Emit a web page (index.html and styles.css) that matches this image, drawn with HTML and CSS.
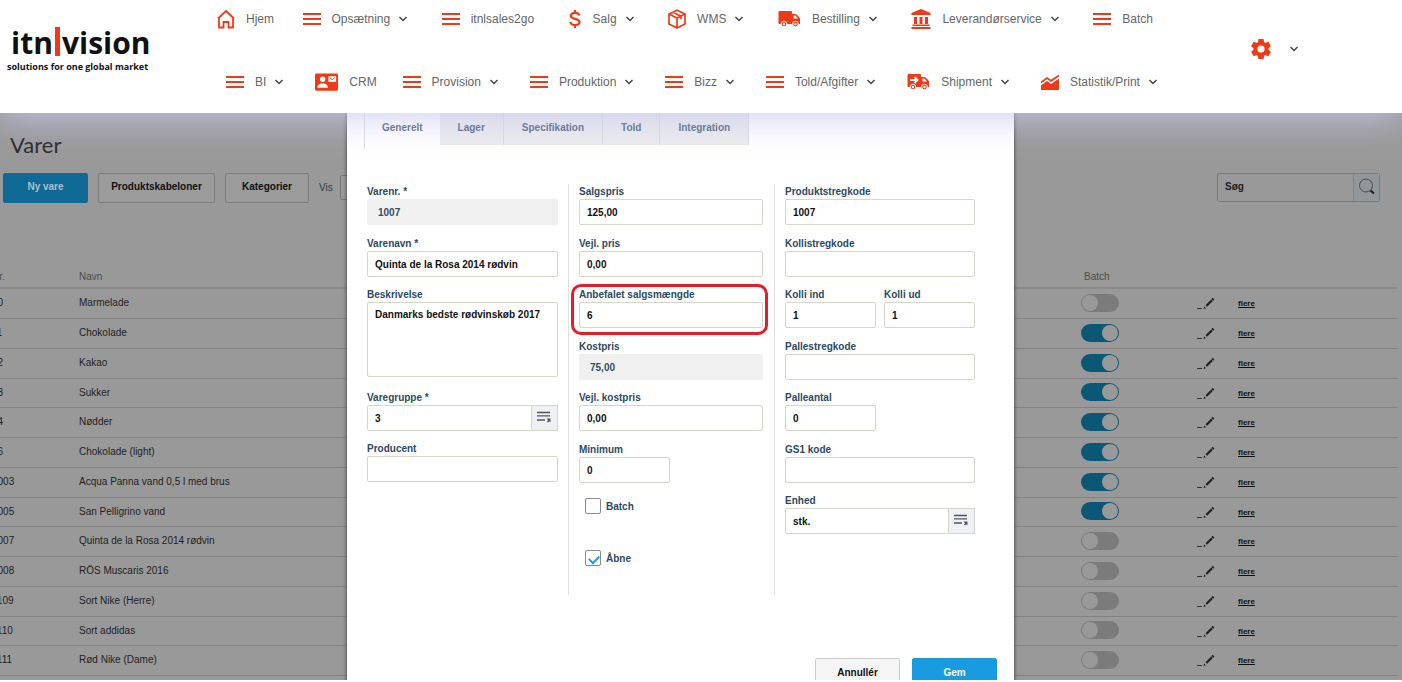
FILE: index.html
```html
<!DOCTYPE html>
<html lang="da">
<head>
<meta charset="utf-8">
<title>Varer</title>
<link rel="stylesheet" href="styles.css">
</head>
<body>
<svg class="sprite" aria-hidden="true">
  <symbol id="bars" viewBox="0 0 18 18"><path d="M0 4h18M0 9h18M0 14h18" stroke="currentColor" stroke-width="2"/></symbol>
  <symbol id="chev" viewBox="0 0 10 10"><path d="M1.500 3 5 6.500 8.500 3" fill="none" stroke="#444" stroke-width="1.500"/></symbol>
  <symbol id="home" viewBox="0 0 18 20"><path d="M1 9.500 9 2l8 7.500M2 9v9.500h4.500v-5.500h5v5.500H16V9" fill="none" stroke="currentColor" stroke-width="1.800"/></symbol>
  <symbol id="dollar" viewBox="0 0 14 20"><path d="M11.500 6.500C11 4.500 9.500 3.800 7 3.800S2.800 5 2.800 6.700c0 4.300 8.700 2 8.700 6.400 0 1.900-1.700 3-4.500 3s-4.300-1-4.700-3.200M7 1v3M7 16v3" fill="none" stroke="currentColor" stroke-width="2.200"/></symbol>
  <symbol id="box" viewBox="0 0 18 20"><path d="M9 1.200 17 5v10l-8 4-8-4V5zM1 5l8 4 8-4M9 9v10M5 3.200l8 4v3" fill="none" stroke="currentColor" stroke-width="1.700" stroke-linejoin="round"/></symbol>
  <symbol id="truck" viewBox="0 0 23 18"><path d="M1.500 1h11.500a1 1 0 0 1 1 1v2h3.500c1 0 4.500 3.500 4.500 4.500V14H1.500a1 1 0 0 1-1-1V2a1 1 0 0 1 1-1z" fill="currentColor"/><path d="M15.500 5.500h2l2.500 3h-4.500z" fill="#fff"/><g fill="currentColor" stroke="#fff"><circle cx="6" cy="14" r="2.800"/><circle cx="17.500" cy="14" r="2.800"/></g><g fill="#fff"><circle cx="6" cy="14" r="1.200"/><circle cx="17.500" cy="14" r="1.200"/></g></symbol>
  <symbol id="bank" viewBox="0 0 20 22"><path d="M10 1 19.500 5v2H.500V5zM3 9h3v7H3zM8.500 9h3v7h-3zM14 9h3v7h-3zM1.500 16.500h17V18h-17zM.500 19h19v2H.500z" fill="currentColor"/></symbol>
  <symbol id="card" viewBox="0 0 24 18"><rect width="24" height="18" rx="1.500" fill="currentColor"/><g fill="#fff"><circle cx="8" cy="6" r="2.800"/><path d="M2.500 15c0-3 2.500-4.500 5.500-4.500s5.500 1.500 5.500 4.500zM14 3h8v6h-8z"/></g><path d="m15.500 4.500 2.500 2.200 2.500-2.200" fill="none" stroke="currentColor"/></symbol>
  <symbol id="chart" viewBox="0 0 18 18"><path d="M0 17V12.500l6-4.500 4 3 8-5.500V17z" fill="currentColor"/><path d="m0 9.500 6-4.500 4 2.800L18 2.500" fill="none" stroke="currentColor" stroke-width="1.800"/></symbol>
  <symbol id="gear" viewBox="0 0 20 20"><g fill="currentColor"><path id="tooth" d="M7.500 0h5l1 5h-7zM7.500 20h5l1-5h-7z"/><use href="#tooth" transform="rotate(60 10 10)"/><use href="#tooth" transform="rotate(120 10 10)"/><circle cx="10" cy="10" r="7.500"/></g><circle cx="10" cy="10" r="3.600" fill="#fff"/></symbol>
  <symbol id="glass" viewBox="0 0 18 18"><circle cx="8" cy="7.500" r="6.500" fill="none" stroke="#4c4c4c"/><path d="m12.500 12.500 3.500 3" stroke="#222" stroke-width="2.200"/></symbol>
  <symbol id="list" viewBox="0 0 15 12"><path d="M0 1.500h13M0 4.800h13M0 9h8" stroke="#555" stroke-width="1.300"/><path d="M9.500 7.500h4v4l-1.300-1.300-1.200 1.300-1-1 1-1.200z" fill="#555"/></symbol>
  <symbol id="pen" viewBox="0 0 18 14"><path d="M0 11.500h5" stroke="#333"/><path d="m6.500 12 .800-2.500 1.700 1.700z" fill="#222"/><path d="m9.300 9 5.700-5.800" stroke="#222" stroke-width="2.300"/><path d="m15.300 2.800 1.200-1.200" stroke="#222" stroke-width="2.600"/></symbol>
</svg>

<header class="topbar">
  <a class="logo" href="#"><span class="logo-name">itn<i class="logo-bar"></i>vision</span><span class="logo-tag">solutions for one global market</span></a>
  <nav class="nav">
    <div class="nav-row nav-first">
      <a class="tight" href="#"><svg class="i18"><use href="#home"/></svg>Hjem</a>
      <a href="#"><svg class="i18"><use href="#bars"/></svg>Opsætning<svg class="chev"><use href="#chev"/></svg></a>
      <a href="#"><svg class="i18"><use href="#bars"/></svg>itnlsales2go</a>
      <a href="#"><svg class="i14"><use href="#dollar"/></svg>Salg<svg class="chev"><use href="#chev"/></svg></a>
      <a href="#"><svg class="i18"><use href="#box"/></svg>WMS<svg class="chev"><use href="#chev"/></svg></a>
      <a href="#"><svg class="i23"><use href="#truck"/></svg>Bestilling<svg class="chev"><use href="#chev"/></svg></a>
      <a href="#"><svg class="i20"><use href="#bank"/></svg>Leverandørservice<svg class="chev"><use href="#chev"/></svg></a>
      <a href="#"><svg class="i18"><use href="#bars"/></svg>Batch</a>
    </div>
    <div class="nav-row nav-second">
      <a href="#"><svg class="i18"><use href="#bars"/></svg>BI<svg class="chev"><use href="#chev"/></svg></a>
      <a class="tight" href="#"><svg class="i23"><use href="#card"/></svg>CRM</a>
      <a href="#"><svg class="i18"><use href="#bars"/></svg>Provision<svg class="chev"><use href="#chev"/></svg></a>
      <a href="#"><svg class="i18"><use href="#bars"/></svg>Produktion<svg class="chev"><use href="#chev"/></svg></a>
      <a href="#"><svg class="i18"><use href="#bars"/></svg>Bizz<svg class="chev"><use href="#chev"/></svg></a>
      <a href="#"><svg class="i18"><use href="#bars"/></svg>Told/Afgifter<svg class="chev"><use href="#chev"/></svg></a>
      <a href="#"><svg class="i23" viewBox="0 0 23 18"><use href="#truck"/><path d="M3 7h7M7.500 4l3 3-3 3" fill="none" stroke="#fff" stroke-width="1.800"/></svg>Shipment<svg class="chev"><use href="#chev"/></svg></a>
      <a href="#"><svg class="i18"><use href="#chart"/></svg>Statistik/Print<svg class="chev"><use href="#chev"/></svg></a>
    </div>
  </nav>
  <div class="account"><button type="button" aria-label="Indstillinger"><svg class="i20"><use href="#gear"/></svg><svg class="chev"><use href="#chev"/></svg></button></div>
</header>

<main class="page">
  <h1>Varer</h1>
  <div class="toolbar">
    <button class="btn btn-new" type="button">Ny vare</button>
    <button class="btn btn-templates" type="button">Produktskabeloner</button>
    <button class="btn" type="button">Kategorier</button>
    <label class="show">Vis <input type="text"></label>
    <form class="search"><input type="text" aria-label="Søg" value="Søg"><button type="button" aria-label="Find"><svg class="i18"><use href="#glass"/></svg></button></form>
  </div>
  <table class="items">
    <colgroup><col class="c-nr"><col><col class="c-batch"><col class="c-edit"><col class="c-more"></colgroup>
    <thead><tr><th>Nr.</th><th>Navn</th><th class="th-batch">Batch</th><th></th><th></th></tr></thead>
    <tbody>
      <tr><td>10</td><td>Marmelade</td><td><input class="switch" type="checkbox" aria-label="Batch"></td><td><svg class="pen"><use href="#pen"/></svg></td><td><a href="#">flere</a></td></tr>
      <tr><td>11</td><td>Chokolade</td><td><input class="switch" type="checkbox" aria-label="Batch" checked></td><td><svg class="pen"><use href="#pen"/></svg></td><td><a href="#">flere</a></td></tr>
      <tr><td>12</td><td>Kakao</td><td><input class="switch" type="checkbox" aria-label="Batch" checked></td><td><svg class="pen"><use href="#pen"/></svg></td><td><a href="#">flere</a></td></tr>
      <tr><td>13</td><td>Sukker</td><td><input class="switch" type="checkbox" aria-label="Batch" checked></td><td><svg class="pen"><use href="#pen"/></svg></td><td><a href="#">flere</a></td></tr>
      <tr><td>14</td><td>Nødder</td><td><input class="switch" type="checkbox" aria-label="Batch" checked></td><td><svg class="pen"><use href="#pen"/></svg></td><td><a href="#">flere</a></td></tr>
      <tr><td>16</td><td>Chokolade (light)</td><td><input class="switch" type="checkbox" aria-label="Batch" checked></td><td><svg class="pen"><use href="#pen"/></svg></td><td><a href="#">flere</a></td></tr>
      <tr><td>1003</td><td>Acqua Panna vand 0,5 l med brus</td><td><input class="switch" type="checkbox" aria-label="Batch" checked></td><td><svg class="pen"><use href="#pen"/></svg></td><td><a href="#">flere</a></td></tr>
      <tr><td>1005</td><td>San Pelligrino vand</td><td><input class="switch" type="checkbox" aria-label="Batch" checked></td><td><svg class="pen"><use href="#pen"/></svg></td><td><a href="#">flere</a></td></tr>
      <tr><td>1007</td><td>Quinta de la Rosa 2014 rødvin</td><td><input class="switch" type="checkbox" aria-label="Batch"></td><td><svg class="pen"><use href="#pen"/></svg></td><td><a href="#">flere</a></td></tr>
      <tr><td>1008</td><td>RÖS Muscaris 2016</td><td><input class="switch" type="checkbox" aria-label="Batch"></td><td><svg class="pen"><use href="#pen"/></svg></td><td><a href="#">flere</a></td></tr>
      <tr><td>1109</td><td>Sort Nike (Herre)</td><td><input class="switch" type="checkbox" aria-label="Batch"></td><td><svg class="pen"><use href="#pen"/></svg></td><td><a href="#">flere</a></td></tr>
      <tr><td>1110</td><td>Sort addidas</td><td><input class="switch" type="checkbox" aria-label="Batch"></td><td><svg class="pen"><use href="#pen"/></svg></td><td><a href="#">flere</a></td></tr>
      <tr><td>1111</td><td>Rød Nike (Dame)</td><td><input class="switch" type="checkbox" aria-label="Batch"></td><td><svg class="pen"><use href="#pen"/></svg></td><td><a href="#">flere</a></td></tr>
    </tbody>
  </table>

  <section class="dialog" role="dialog" aria-label="Vare">
    <div class="tabs" role="tablist">
      <button type="button" role="tab" class="tab active">Generelt</button><button type="button" role="tab" class="tab">Lager</button><button type="button" role="tab" class="tab">Specifikation</button><button type="button" role="tab" class="tab">Told</button><button type="button" role="tab" class="tab">Integration</button>
    </div>
    <form class="form">
      <div class="col">
        <div class="field"><label for="nr">Varenr. *</label><input id="nr" type="text" value="1007" readonly></div>
        <div class="field"><label for="navn">Varenavn *</label><input id="navn" type="text" value="Quinta de la Rosa 2014 rødvin"></div>
        <div class="field"><label for="besk">Beskrivelse</label><textarea id="besk">Danmarks bedste rødvinskøb 2017</textarea></div>
        <div class="field"><label for="grp">Varegruppe *</label><div class="picker"><input id="grp" type="text" value="3"><button type="button" aria-label="Vælg varegruppe"><svg class="list"><use href="#list"/></svg></button></div></div>
        <div class="field"><label for="prod">Producent</label><input id="prod" type="text"></div>
      </div>
      <div class="col">
        <div class="field"><label for="pris">Salgspris</label><input id="pris" type="text" value="125,00"></div>
        <div class="field"><label for="vpris">Vejl. pris</label><input id="vpris" type="text" value="0,00"></div>
        <div class="field marked"><label for="anb">Anbefalet salgsmængde</label><input id="anb" type="text" value="6"></div>
        <div class="field"><label for="kost">Kostpris</label><input id="kost" type="text" value="75,00" readonly></div>
        <div class="field"><label for="vkost">Vejl. kostpris</label><input id="vkost" type="text" value="0,00"></div>
        <div class="field half"><label for="min">Minimum</label><input id="min" type="text" value="0"></div>
        <label class="check"><input type="checkbox">Batch</label>
        <label class="check"><input type="checkbox" checked>Åbne</label>
      </div>
      <div class="col">
        <div class="field"><label for="pkode">Produktstregkode</label><input id="pkode" type="text" value="1007"></div>
        <div class="field"><label for="kkode">Kollistregkode</label><input id="kkode" type="text"></div>
        <div class="field pair">
          <div><label for="kind">Kolli ind</label><input id="kind" type="text" value="1"></div>
          <div><label for="kud">Kolli ud</label><input id="kud" type="text" value="1"></div>
        </div>
        <div class="field"><label for="plkode">Pallestregkode</label><input id="plkode" type="text"></div>
        <div class="field half"><label for="pant">Palleantal</label><input id="pant" type="text" value="0"></div>
        <div class="field"><label for="gs1">GS1 kode</label><input id="gs1" type="text"></div>
        <div class="field"><label for="enh">Enhed</label><div class="picker"><input id="enh" type="text" value="stk."><button type="button" aria-label="Vælg enhed"><svg class="list"><use href="#list"/></svg></button></div></div>
      </div>
    </form>
    <div class="actions"><button class="act" type="button">Annullér</button><button class="act save" type="button">Gem</button></div>
  </section>
</main>
</body>
</html>
```
FILE: styles.css
```css
* { box-sizing: border-box; }
body {
  margin: 0;
  height: 100vh;
  padding-bottom: 2px;
  display: flex;
  flex-direction: column;
  overflow: hidden;
  background: #fff;
  font-family: "Liberation Sans", Arial, sans-serif;
  font-size: 10px;
}
button, input, textarea { font: inherit; margin: 0; }
button { cursor: pointer; }
.sprite { position: absolute; width: 0; height: 0; }

/* top bar */
.topbar {
  position: relative;
  z-index: 3;
  flex: none;
  height: 113px;
  display: flex;
  background: #fff;
  box-shadow: 0 2px 36px #c8c8f0;
}
.logo {
  width: 217px;
  padding: 25px 0 0 7px;
  color: #111;
  text-decoration: none;
  font-family: "Open Sans", "Noto Sans", sans-serif;
}
.logo-name { display: flex; padding-left: 4px; font-size: 30px; font-weight: 700; line-height: 36px; }
.logo-bar { width: 5px; height: 29px; margin: 2px 2px 0 2px; background: #f03a17; }
.logo-tag { display: block; font-size: 9px; font-weight: 700; line-height: 12px; white-space: nowrap; }
.nav { flex: 1; }
.nav-row { display: flex; justify-content: space-between; align-items: center; }
.nav-first { height: 38px; padding-right: 5px; }
.nav-second { height: 24px; margin-top: 32px; padding-left: 9px; }
.nav a {
  display: flex;
  align-items: center;
  color: #666;
  font-size: 12px;
  text-decoration: none;
  white-space: nowrap;
}
.nav .tight { margin-right: -5px; }
.nav a > svg:first-child { margin-right: 11px; color: #f03a17; }
.i14 { width: 14px; height: 20px; }
.i18 { width: 18px; height: 20px; }
.i20 { width: 20px; height: 22px; }
.i23 { width: 23px; height: 18px; }
.chev { width: 10px; height: 10px; margin-left: 8px; }
.account { width: 244px; padding: 38px 0 0 93px; }
.account button { display: flex; align-items: center; padding: 0; border: 0; background: none; color: #f03a17; }
.account .chev { margin-left: 18px; }

/* item list */
.page {
  position: relative;
  flex: 1;
  min-height: 0;
  padding-top: 18px;
  overflow: hidden;
  background: #999;
}
h1 { margin: 0 0 14px 10px; font: 400 22px/28px Lato, sans-serif; color: #2a2a2a; }
.toolbar { display: flex; align-items: flex-start; gap: 10px; padding: 0 22px 0 3px; }
.btn {
  width: 84px;
  height: 30px;
  padding: 0 0 3px;
  border: 1px solid #7b7b7b;
  border-radius: 2px;
  background: #9b9b9b;
  color: #111;
  font-weight: 700;
}
.btn-new { width: 85px; border-color: #126a92; background: #0f6b95; color: #aebfc8; }
.btn-templates { width: 117px; }
.show { display: flex; align-items: center; gap: 7px; padding-top: 2px; color: #2b3a46; }
.show input { width: 60px; height: 25px; border: 1px solid #777; border-radius: 2px; background: #9b9b9b; }
.search { display: flex; width: 163px; height: 29px; margin-left: auto; border: 1px solid #7a7a7a; border-radius: 2px; }
.search input { flex: 1; min-width: 0; padding: 0 7px 2px; border: 0; background: #999; color: #222; font-weight: 700; }
.search button { width: 26px; padding: 0; border: 0; border-left: 1px solid #7f868a; background: #91979b; }
.items { table-layout: fixed; width: calc(100% + 4px); margin: 61px 0 0 -8px; border-collapse: collapse; color: #1f1f1f; }
.c-nr { width: 87px; }
.c-batch { width: 116px; }
.c-edit { width: 41px; }
.c-more { width: 160px; }
.items th { height: 24px; padding: 2px 0 0; border-bottom: 2px solid #8b8b8b; text-align: left; font-weight: 400; color: #4c4c4c; }
.items .th-batch { padding-left: 3px; }
.items td { height: 30px; padding: 0 0 1px; border-bottom: 1px solid #828282; vertical-align: middle; }
.items tr:nth-child(4n) td { height: 29px; }
.items a { color: #111; font-size: 8px; font-weight: 700; }
.pen { display: block; width: 18px; height: 14px; margin-top: 3px; }
.switch {
  appearance: none;
  display: flex;
  width: 38px;
  height: 18px;
  margin: 0;
  padding: 1px;
  border-radius: 9px;
  background: #7b7b7b;
}
.switch::before { content: ""; width: 16px; height: 16px; border-radius: 8px; background: #999; }
.switch:checked { justify-content: flex-end; background: #0b5876; }

/* dialog */
.dialog {
  position: absolute;
  z-index: 2;
  top: 0;
  left: 347px;
  width: 667px;
  min-height: 100%;
  padding-left: 17px;
  background: #fff;
  box-shadow: 0 0 4px #333;
}
.tabs { display: flex; align-items: flex-start; border-left: 1px solid #ddd; height: 36px; }
.tab {
  height: 32px;
  padding: 0 18px 3px;
  border: 0;
  border-right: 1px solid #d9dbe0;
  background: #ebebed;
  color: #4b6477;
  font-weight: 700;
}
.tab.active { padding: 0 17px 3px; background: #fff; border-right: 0; }
.form { display: flex; padding: 35px 0 0 3px; color: #2b4a63; font-weight: 700; }
.col { min-height: 411px; width: 206px; padding: 0 11px 0 10px; border-left: 1px solid #e0e0e0; }
.col:first-child { width: 201px; padding-left: 0; border-left: 0; padding-right: 10px; }
.col:last-child { width: 212px; }
.field { position: relative; margin-bottom: 10px; }
.field:nth-child(odd) { margin-bottom: 11px; }
.field label { display: block; height: 15px; line-height: 15px; }
.field input, .field textarea {
  display: block;
  width: 100%;
  height: 26px;
  padding: 0 7px;
  border: 1px solid #d5d5c8;
  border-radius: 2px;
  background: #fff;
  color: #111;
  font-weight: 700;
}
.field input[readonly] { padding-left: 10px; border-color: #f0f0f0; background: #f0f0f0; color: #2f4f68; }
.field textarea { height: 75px; margin-bottom: 13px; padding-top: 6px; resize: none; overflow: hidden; }
.field.half input { width: 91px; }
.pair { display: grid; grid-template-columns: 1fr 1fr; gap: 8px; }
.picker { display: flex; }
.picker input { flex: 1; min-width: 0; border-radius: 2px 0 0 2px; }
.picker button { width: 26px; padding: 0; border: 1px solid #d5d5c8; border-left: 0; background: #edf0f5; }
.list { width: 15px; height: 12px; }
.marked::after {
  content: "";
  position: absolute;
  inset: -3px -5px -7px -8px;
  border: 3px solid #e81c24;
  border-radius: 10px;
  pointer-events: none;
}
.check { display: flex; align-items: center; gap: 5px; height: 16px; margin: 15px 0 36px 6px; }
.check:last-child { margin-bottom: 0; }
.check input { appearance: none; width: 16px; height: 16px; border: 1px solid #8a8a8a; border-radius: 2px; background: #fff; }
.check input:checked::before {
  content: "";
  display: block;
  width: 8px;
  height: 5px;
  margin: 4px 3px;
  border: solid #1c9be0;
  border-width: 0 0 2px 2px;
  transform: rotate(-45deg);
}
.actions { display: flex; justify-content: flex-end; gap: 12px; padding: 63px 17px 20px 0; }
.act { width: 85px; height: 30px; padding: 0 0 2px; border: 1px solid #ccc; border-radius: 2px; background: #f5f5f5; color: #111; font-weight: 700; }
.act.save { border-color: #189be0; background: #189be0; color: #fff; }
```
